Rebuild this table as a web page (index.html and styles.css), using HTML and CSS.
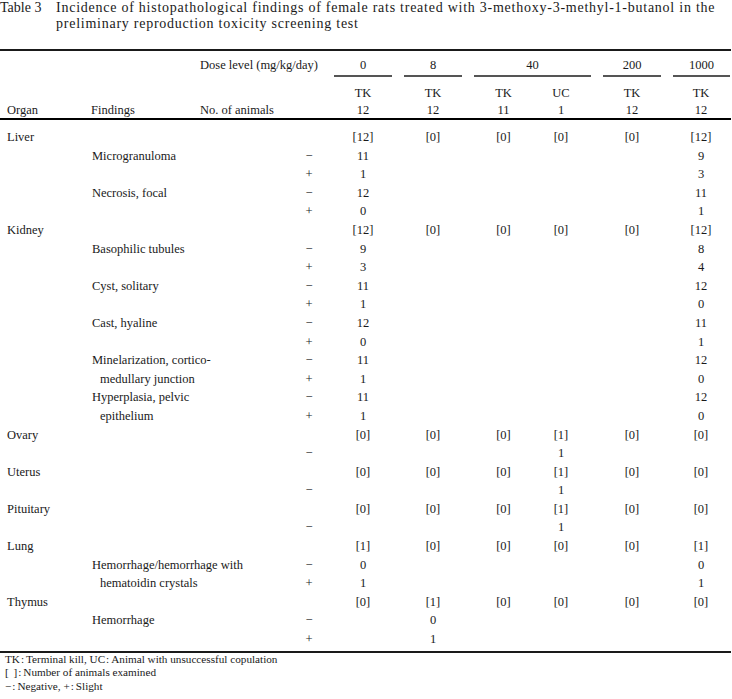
FILE: index.html
```html
<!DOCTYPE html>
<html lang="en">
<head>
<meta charset="utf-8">
<title>Table 3</title>
<link rel="stylesheet" href="styles.css">
</head>
<body>
<div class="caption">
  <span class="cap-label">Table 3</span>
  <span class="cap-text">Incidence of histopathological findings of female rats treated with 3-methoxy-3-methyl-1-butanol in the preliminary reproduction toxicity screening test</span>
</div>

<table class="data">
  <colgroup>
    <col class="c-organ"><col class="c-find"><col class="c-label"><col class="c-sign">
    <col class="c-d0"><col class="c-d8"><col class="c-d40tk"><col class="c-d40uc"><col class="c-d200"><col class="c-d1000">
  </colgroup>
  <thead>
    <tr class="h1">
      <th></th><th></th>
      <th colspan="2" class="lbl">Dose level (mg/kg/day)</th>
      <th><div class="dose">0</div></th>
      <th><div class="dose">8</div></th>
      <th colspan="2"><div class="dose">40</div></th>
      <th><div class="dose">200</div></th>
      <th class="last"><div class="dose dose-last">1000</div></th>
    </tr>
    <tr class="h2">
      <th></th><th></th><th></th><th></th>
      <th>TK</th><th>TK</th><th>TK</th><th class="uc">UC</th><th>TK</th><th class="last">TK</th>
    </tr>
    <tr class="h3">
      <th class="lbl organ">Organ</th>
      <th class="lbl find">Findings</th>
      <th colspan="2" class="lbl">No. of animals</th>
      <th>12</th><th>12</th><th>11</th><th class="uc">1</th><th>12</th><th class="last">12</th>
    </tr>
  </thead>
  <tbody>
    <tr class="first"><td class="organ">Liver</td><td colspan="2"></td><td></td><td>[12]</td><td>[0]</td><td>[0]</td><td class="uc">[0]</td><td>[0]</td><td class="last">[12]</td></tr>
    <tr><td></td><td colspan="2" class="find">Microgranuloma</td><td class="sign">−</td><td>11</td><td></td><td></td><td class="uc"></td><td></td><td class="last">9</td></tr>
    <tr><td></td><td colspan="2"></td><td class="sign">+</td><td>1</td><td></td><td></td><td class="uc"></td><td></td><td class="last">3</td></tr>
    <tr><td></td><td colspan="2" class="find">Necrosis, focal</td><td class="sign">−</td><td>12</td><td></td><td></td><td class="uc"></td><td></td><td class="last">11</td></tr>
    <tr><td></td><td colspan="2"></td><td class="sign">+</td><td>0</td><td></td><td></td><td class="uc"></td><td></td><td class="last">1</td></tr>

    <tr><td class="organ">Kidney</td><td colspan="2"></td><td></td><td>[12]</td><td>[0]</td><td>[0]</td><td class="uc">[0]</td><td>[0]</td><td class="last">[12]</td></tr>
    <tr><td></td><td colspan="2" class="find">Basophilic tubules</td><td class="sign">−</td><td>9</td><td></td><td></td><td class="uc"></td><td></td><td class="last">8</td></tr>
    <tr><td></td><td colspan="2"></td><td class="sign">+</td><td>3</td><td></td><td></td><td class="uc"></td><td></td><td class="last">4</td></tr>
    <tr><td></td><td colspan="2" class="find">Cyst, solitary</td><td class="sign">−</td><td>11</td><td></td><td></td><td class="uc"></td><td></td><td class="last">12</td></tr>
    <tr><td></td><td colspan="2"></td><td class="sign">+</td><td>1</td><td></td><td></td><td class="uc"></td><td></td><td class="last">0</td></tr>
    <tr><td></td><td colspan="2" class="find">Cast, hyaline</td><td class="sign">−</td><td>12</td><td></td><td></td><td class="uc"></td><td></td><td class="last">11</td></tr>
    <tr><td></td><td colspan="2"></td><td class="sign">+</td><td>0</td><td></td><td></td><td class="uc"></td><td></td><td class="last">1</td></tr>
    <tr><td></td><td colspan="2" class="find">Minelarization, cortico-</td><td class="sign">−</td><td>11</td><td></td><td></td><td class="uc"></td><td></td><td class="last">12</td></tr>
    <tr><td></td><td colspan="2" class="find cont">medullary junction</td><td class="sign">+</td><td>1</td><td></td><td></td><td class="uc"></td><td></td><td class="last">0</td></tr>
    <tr><td></td><td colspan="2" class="find">Hyperplasia, pelvic</td><td class="sign">−</td><td>11</td><td></td><td></td><td class="uc"></td><td></td><td class="last">12</td></tr>
    <tr><td></td><td colspan="2" class="find cont">epithelium</td><td class="sign">+</td><td>1</td><td></td><td></td><td class="uc"></td><td></td><td class="last">0</td></tr>

    <tr><td class="organ">Ovary</td><td colspan="2"></td><td></td><td>[0]</td><td>[0]</td><td>[0]</td><td class="uc">[1]</td><td>[0]</td><td class="last">[0]</td></tr>
    <tr><td></td><td colspan="2"></td><td class="sign">−</td><td></td><td></td><td></td><td class="uc">1</td><td></td><td class="last"></td></tr>

    <tr><td class="organ">Uterus</td><td colspan="2"></td><td></td><td>[0]</td><td>[0]</td><td>[0]</td><td class="uc">[1]</td><td>[0]</td><td class="last">[0]</td></tr>
    <tr><td></td><td colspan="2"></td><td class="sign">−</td><td></td><td></td><td></td><td class="uc">1</td><td></td><td class="last"></td></tr>

    <tr><td class="organ">Pituitary</td><td colspan="2"></td><td></td><td>[0]</td><td>[0]</td><td>[0]</td><td class="uc">[1]</td><td>[0]</td><td class="last">[0]</td></tr>
    <tr><td></td><td colspan="2"></td><td class="sign">−</td><td></td><td></td><td></td><td class="uc">1</td><td></td><td class="last"></td></tr>

    <tr><td class="organ">Lung</td><td colspan="2"></td><td></td><td>[1]</td><td>[0]</td><td>[0]</td><td class="uc">[0]</td><td>[0]</td><td class="last">[1]</td></tr>
    <tr><td></td><td colspan="2" class="find">Hemorrhage/hemorrhage with</td><td class="sign">−</td><td>0</td><td></td><td></td><td class="uc"></td><td></td><td class="last">0</td></tr>
    <tr><td></td><td colspan="2" class="find cont">hematoidin crystals</td><td class="sign">+</td><td>1</td><td></td><td></td><td class="uc"></td><td></td><td class="last">1</td></tr>

    <tr><td class="organ">Thymus</td><td colspan="2"></td><td></td><td>[0]</td><td>[1]</td><td>[0]</td><td class="uc">[0]</td><td>[0]</td><td class="last">[0]</td></tr>
    <tr><td></td><td colspan="2" class="find">Hemorrhage</td><td class="sign">−</td><td></td><td>0</td><td></td><td class="uc"></td><td></td><td class="last"></td></tr>
    <tr class="final"><td></td><td colspan="2"></td><td class="sign">+</td><td></td><td>1</td><td></td><td class="uc"></td><td></td><td class="last"></td></tr>
  </tbody>
</table>

<div class="notes">
  <p>TK<span class="colon">:</span>Terminal kill, UC<span class="colon">:</span>Animal with unsuccessful copulation</p>
  <p><span class="brackets">[ ]</span><span class="colon">:</span>Number of animals examined</p>
  <p>−<span class="colon">:</span>Negative, +<span class="colon">:</span>Slight</p>
</div>
</body>
</html>
```

FILE: styles.css
```css
html, body {
  margin: 0;
  padding: 0;
  background: #fff;
}

body {
  font-family: "Liberation Serif", "Noto Sans CJK JP", serif;
  color: #1a1a1a;
  width: 732px;
}

.caption {
  display: flex;
  font-size: 14px;
  line-height: 16px;
  height: 32px;
}

.cap-label {
  flex: 0 0 56px;
}

.cap-text {
  flex: 1;
  letter-spacing: 0.75px;
}

.data {
  margin-top: 17px;
  width: 731px;
  table-layout: fixed;
  border-collapse: collapse;
  border-top: 2px solid #1a1a1a;
  border-bottom: 2px solid #1a1a1a;
  font-size: 12.5px;
}

.c-organ { width: 85px; }
.c-find { width: 115px; }
.c-label { width: 90px; }
.c-sign { width: 38px; }
.c-d0 { width: 70px; }
.c-d8 { width: 70px; }
.c-d40tk { width: 71px; }
.c-d40uc { width: 58px; }
.c-d200 { width: 70px; }
.c-d1000 { width: 64px; }

.data th,
.data td {
  padding: 0;
  font-weight: normal;
  text-align: center;
  vertical-align: top;
  white-space: nowrap;
}

.data .lbl { text-align: left; }
.data .organ { text-align: left; padding-left: 7px; }
.data th.find { padding-left: 6px; }
.data td.find { text-align: left; padding-left: 7px; }
.data td.find.cont { padding-left: 15px; }
.data .uc { padding-right: 14px; }
.data .last { padding-left: 4px; }

.h1 th {
  padding-top: 6px;
  line-height: 16px;
}

.dose {
  margin: 0 6px;
  padding-bottom: 2px;
  border-bottom: 2px solid #555;
}

.dose-last {
  margin: 0 1px 0 2px;
}

.h2 th {
  padding-top: 9px;
  line-height: 15.5px;
}

.h3 th {
  line-height: 16px;
  padding-bottom: 0.5px;
  border-bottom: 2px solid #000;
}

.data td {
  line-height: 18.6px;
}

.data tr.first td { padding-top: 8px; }
.data tr.final td { padding-bottom: 2px; }

.notes {
  padding-left: 5px;
  font-size: 11.2px;
  line-height: 13.5px;
}

.notes p {
  margin: 0;
}

.colon {
  padding: 0 2px 0 1px;
}

.brackets {
  word-spacing: 2px;
}
```
